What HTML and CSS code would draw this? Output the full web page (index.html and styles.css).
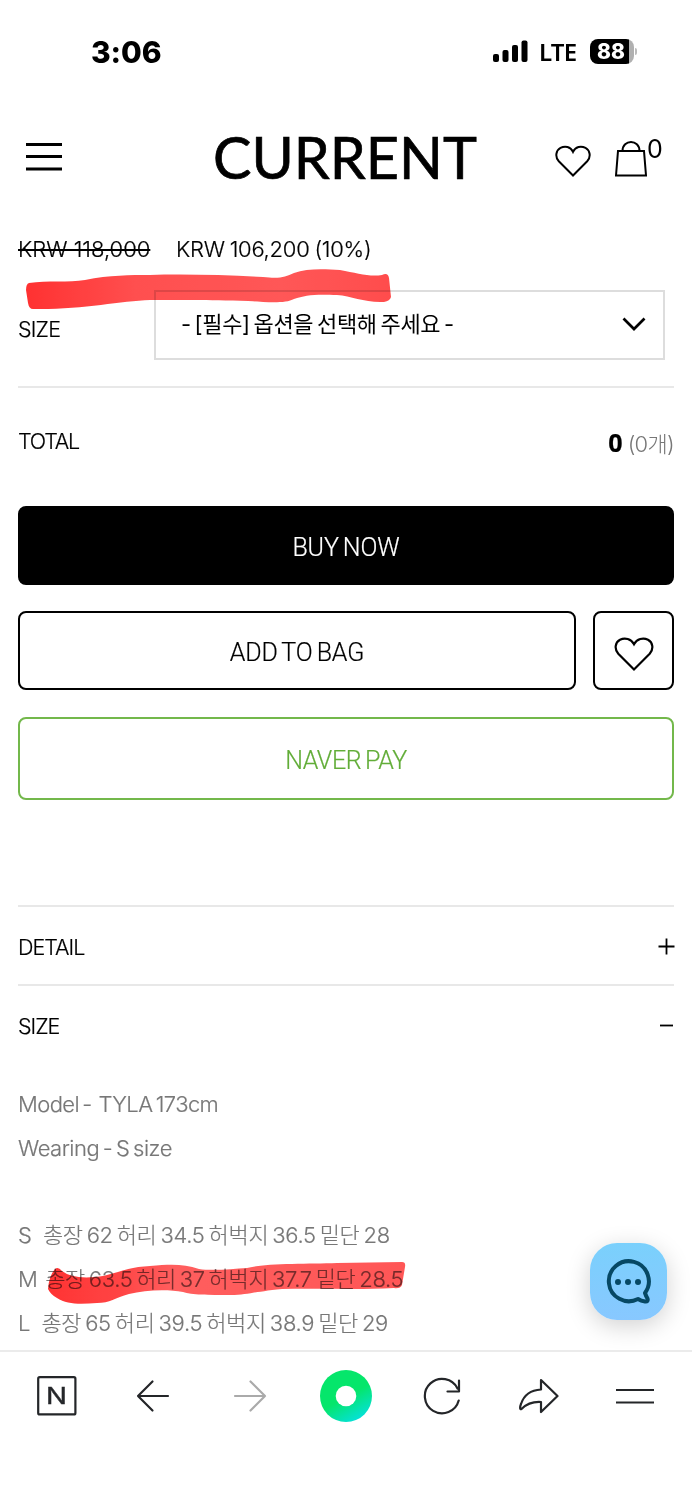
FILE: index.html
```html
<!DOCTYPE html>
<html lang="ko">
<head>
<meta charset="utf-8">
<title>CURRENT</title>
<link rel="stylesheet" href="styles.css">
</head>
<body>
<div class="status">
  <span class="clock">3:06</span>
  <div class="status-icons">
    <svg class="signal" width="35" height="23" viewBox="0 0 35 23"><rect x="0" y="14" width="6" height="8" rx="2"/><rect x="9.500" y="10" width="6" height="12" rx="2"/><rect x="19" y="5" width="6" height="17" rx="2"/><rect x="28.500" y="0.500" width="6" height="21.500" rx="2"/></svg>
    <span class="lte">LTE</span>
    <span class="battery"><span class="level">88</span></span><span class="nub"></span>
  </div>
</div>
<header class="header">
  <svg class="burger" width="36" height="30" viewBox="0 0 36 30"><path d="M0 2.500H36M0 14.500H36M0 27H36" stroke="#000" stroke-width="3"/></svg>
  <svg class="logo" width="272" height="76" viewBox="-2 -8 272 76"><text x="-2" y="50.500" textLength="264" lengthAdjust="spacingAndGlyphs">CURRENT</text></svg>
  <svg class="wish" width="36" height="32" viewBox="0 0 36 32"><path d="M18 30.500L3.800 16.300C-.3 12 1 5 5.500 2.800C10 .6 15.500 1.500 18 6.800C20.500 1.500 26 .6 30.500 2.800C35 5 36.300 12 32.200 16.300Z" fill="none" stroke="#000" stroke-width="2"/></svg>
  <svg class="bag" width="32" height="37" viewBox="0 0 32 37"><path d="M3 11H29L31 35.500H1ZM7.500 11C7.500-1 24.500-1 24.500 11" fill="none" stroke="#000" stroke-width="2"/></svg>
  <span class="count">0</span>
</header>
<main class="product">
  <div class="prices"><s class="t-old">KRW 118,000</s><span class="t-new">KRW 106,200 (10%)</span></div>
  <div class="option">
    <label>SIZE</label>
    <div class="select"><span class="t-select">- [필수] 옵션을 선택해 주세요 -</span>
      <svg width="24" height="15" viewBox="0 0 24 15"><path d="M1.500 1.500L12 12L22.500 1.500" fill="none" stroke="#000" stroke-width="2.700"/></svg></div>
  </div>
  <div class="total"><span class="t-total">TOTAL</span><span class="sum"><b>0</b><span class="qty">(0개)</span></span></div>
  <div class="actions">
    <div class="btn buy"><span>BUY NOW</span></div>
    <div class="btn-row">
      <div class="btn add"><span>ADD TO BAG</span></div>
      <div class="btn heart"><svg width="40" height="35" viewBox="0 0 40 35"><path d="M20 32.500L4.300 16.800C0 12 1.200 5.200 6 2.700C11 .4 17 1.800 20 7.200C23 1.800 29 .4 34 2.700C38.800 5.200 40 12 35.700 16.800Z" fill="none" stroke="#000" stroke-width="2.200"/></svg></div>
    </div>
    <div class="btn naver"><span>NAVER PAY</span></div>
  </div>
  <section class="accordion">
    <div class="row"><span class="t-detail">DETAIL</span><svg width="17" height="17" viewBox="0 0 17 17"><path d="M.5 8.500H16.500M8.500 .5V16.500" stroke="#000" stroke-width="1.800"/></svg></div>
    <div class="row"><span class="t-size">SIZE</span><svg width="17" height="17" viewBox="0 0 17 17"><path d="M2 8.500H15" stroke="#000" stroke-width="1.800"/></svg></div>
    <div class="info">
      <div class="t-model">Model -&nbsp; TYLA 173cm</div>
      <div class="t-wear">Wearing - S size</div>
      <div>&nbsp;</div>
      <div class="size-line"><span class="letter">S&nbsp; </span>총장 62 허리 34.5 허벅지 36.5 밑단 28</div>
      <div class="size-line size-m"><span>M&nbsp; </span>총장 63.5 허리 37 허벅지 37.7 밑단 28.5</div>
      <div class="size-line"><span class="letter">L&nbsp; </span>총장 65 허리 39.5 허벅지 38.9 밑단 29</div>
    </div>
  </section>
</main>
<nav class="toolbar">
  <svg width="40" height="40" viewBox="0 0 40 40"><rect x="1.200" y="1.200" width="37.200" height="37.200" rx="1.500" fill="none" stroke="#242629" stroke-width="2.200"/><text class="n-mark" x="9" y="27.500" textLength="21" lengthAdjust="spacingAndGlyphs">N</text></svg>
  <svg width="34" height="34" viewBox="0 0 34 34"><path d="M32 17H2M16.500 2.500L2 17L16.500 31.500" class="line"/></svg>
  <svg width="34" height="34" viewBox="0 0 34 34"><path d="M2 17H32M17.500 2.500L32 17L17.500 31.500" class="line dim"/></svg>
  <svg width="52" height="52" viewBox="0 0 52 52"><defs><linearGradient id="ring" x1=".3" y1=".1" x2=".8" y2="1"><stop offset=".45" stop-color="#05e66b"/><stop offset="1" stop-color="#05e0e8"/></linearGradient></defs><circle cx="26" cy="26" r="26" fill="url(#ring)"/><circle cx="26" cy="26" r="10.300" fill="#fff"/></svg>
  <svg width="38" height="38" viewBox="0 0 38 38"><path d="M35.700 23.500A17.200 17.200 0 1 1 34.500 11.500M36 3.500V14.500H24.500" class="line"/></svg>
  <svg width="40" height="36" viewBox="0 0 40 36"><path d="M22 2L38.500 18L22 34V24C14 23.500 8 25.500 2.500 31C.5 32 1 28.500 2 26C5 17 12 12 22 11.500Z" class="line"/></svg>
  <svg width="40" height="18" viewBox="0 0 40 18"><path d="M1 3H39M1 15.500H39" class="line square"/></svg>
</nav>
<div class="chat"><svg width="46" height="46" viewBox="0 0 46 46"><path d="M40 34A20 20 0 1 0 33 40Q36 42 40 42.500Q43.500 43 42.500 39.500Q41 37 40 34Z" fill="none" stroke="#064864" stroke-width="4" stroke-linejoin="round"/><circle cx="13" cy="23" r="3"/><circle cx="23" cy="23" r="3"/><circle cx="33" cy="23" r="3"/></svg></div>
<svg class="marker marker-price" width="370" height="46" viewBox="0 0 370 46">
  <defs><linearGradient id="ink1"><stop offset="0" stop-color="#ff2626"/><stop offset=".3" stop-color="#ff4545"/><stop offset=".7" stop-color="#ff4e4e"/><stop offset="1" stop-color="#ff4242"/></linearGradient></defs>
  <path d="M4 15C22 12 44 15 60 12C85 7 105 7 125 7C160 6 200 7 238 9C255 11 260 9 269 5C282 0 300 1 315 2C332 5 344 9 357 7Q363 4 364 10L366 29Q365 33 359 34C340 35 327 28 312 27C290 26 280 27 269 31C260 36 240 34 223 33C180 32 155 32 125 32C95 33 55 42 8 41Q4 41 3 35L1 22Q1 16 4 15Z" fill="url(#ink1)"/></svg>
<svg class="marker marker-size" width="362" height="44" viewBox="0 0 362 44">
  <defs><linearGradient id="ink2"><stop offset="0" stop-color="#ff2828"/><stop offset=".2" stop-color="#ff3a3a"/><stop offset=".35" stop-color="#ff5555"/><stop offset="1" stop-color="#ff4d4d"/></linearGradient></defs>
  <path d="M8 7Q11 4 15 9Q25 17 48 15C65 14 78 5 103 4C125 2 137 2 152 7C165 9 185 7 200 6C220 1 260 2 290 1L355 0Q359 0 358 5L355 23Q353 27 347 26C310 28 270 26 235 27C205 30 200 33 184 33C160 33 145 33 136 30C120 27 98 28 82 32C68 36 63 41 50 41C35 42 20 43 10 36Q4 33 1 27Q2 14 8 7Z" fill="url(#ink2)"/></svg>
</body>
</html>
```

FILE: styles.css
```css
* { box-sizing: border-box; }
body {
  margin: 0;
  width: 692px;
  height: 1500px;
  overflow: hidden;
  position: relative;
  display: flex;
  flex-direction: column;
  background: #fff;
  color: #000;
  font: 300 22px/30px Inter, "Noto Sans CJK KR", sans-serif;
  white-space: nowrap;
}
svg { display: block; flex: none; }
span, s, b { white-space: nowrap; }

.status { height: 104px; padding: 35px 55px 0 91px; display: flex; justify-content: space-between; align-items: flex-start; }
.clock { font-weight: 800; font-size: 30px; line-height: 34px; letter-spacing: -0.1px; }
.status-icons { display: flex; align-items: center; height: 33px; }
.lte { font: 600 24px/30px "Noto Sans", sans-serif; margin-left: 11px; width: 51px; letter-spacing: -0.8px; }
.battery { width: 44px; height: 25px; border-radius: 8px; background: linear-gradient(90deg, #000 39px, #b0b0b0 39px); display: flex; }
.level { width: 42px; color: #fff; font-weight: 800; font-size: 21px; line-height: 26px; text-align: center; }
.nub { width: 2px; height: 7px; margin-left: 1px; background: #bbb; border-radius: 0 2px 2px 0; }

.header { height: 106px; padding: 26px 30px 0 26px; display: flex; align-items: flex-start; }
.burger { margin-top: 12px; }
.logo { margin: -10px 0 0 151px; }
.logo text { font: 400 58px Lato, sans-serif; stroke: #000; stroke-width: 0.7px; }
.wish { margin-left: 70px; margin-top: 15px; }
.bag { margin-left: 24px; margin-top: 10px; }
.count { font-size: 25px; font-weight: 400; line-height: 30px; margin-top: 4px; }

.product { padding: 0 18px; height: 1140px; flex: none; -webkit-text-stroke: 0.2px; }
.prices { height: 80px; padding-top: 24px; display: flex; }
.t-old { width: 133px; margin-right: 25px; text-decoration-thickness: 2px; }
.t-new { letter-spacing: -0.25px; word-spacing: -1px; }
.option { height: 98px; display: flex; align-items: flex-start; border-bottom: 2px solid #e8e8e8; }
.option label { width: 136px; padding-top: 24px; font-size: 21.5px; letter-spacing: -0.8px; }
.select { width: 511px; height: 70px; border: 2px solid #ddd; padding: 0 17px 2px 25px; display: flex; align-items: center; justify-content: space-between; font-weight: 400; -webkit-text-stroke: 0; }
.t-select { letter-spacing: -0.35px; word-spacing: -2px; }
.total { height: 118px; padding-top: 38px; display: flex; justify-content: space-between; }
.t-total { letter-spacing: -1.2px; font-size: 21.5px; }
.sum { padding-top: 1px; }
.sum b { font: 700 25px/30px "Noto Sans", sans-serif; margin-right: 5px; }
.qty { color: #777; letter-spacing: -0.7px; -webkit-text-stroke: 0; }

.actions { display: flex; flex-direction: column; gap: 26px; }
.btn { height: 79px; border: 2px solid #000; border-radius: 8px; display: flex; align-items: center; justify-content: center; padding-top: 4px; font: 300 25px/30px Roboto, sans-serif; letter-spacing: -0.1px; word-spacing: -2px; }
.btn-row { display: flex; gap: 17px; }
.buy { color: #fff; background: #000; }
.add { width: 558px; }
.heart { width: 81px; padding-top: 7px; }
.naver { height: 83px; border-color: #73b84b; color: #62ad38; margin-top: 1px; padding-top: 4px; letter-spacing: -0.4px; }

.accordion { margin-top: 105px; }
.row { height: 79px; border-top: 2px solid #e8e8e8; display: flex; align-items: center; justify-content: space-between; padding-top: 3px; }
.t-detail, .t-size { letter-spacing: -1px; font-size: 21.5px; }
.row svg { margin: -1px -1px 0 0; }
.info { padding-top: 19px; color: #777; line-height: 44px; }
.info div { height: 44px; }
.t-model { letter-spacing: -0.6px; word-spacing: -2.2px; }
.t-wear { letter-spacing: -0.5px; word-spacing: -2px; }
.size-line { letter-spacing: -0.3px; word-spacing: -2px; position: relative; top: -1px; }
.letter { margin-right: 3.5px; }
.size-m { letter-spacing: -0.35px; }

.toolbar { height: 150px; flex: none; border-top: 2px solid #ebebeb; padding: 18px 9px 0; display: grid; grid-template-columns: repeat(7, 1fr); justify-items: center; align-content: start; align-items: center; background: #fff; position: relative; z-index: 2; }
.line { fill: none; stroke: #242629; stroke-width: 2.200; stroke-linecap: round; stroke-linejoin: round; }
.dim { stroke: #aaa; }
.square { stroke-linecap: butt; }
.n-mark { font: 400 23px Inter, sans-serif; fill: #242629; stroke: #242629; stroke-width: 0.4px; }

.chat { position: absolute; left: 590px; top: 1243px; width: 77px; height: 77px; padding-right: 2px; border-radius: 27px; background: linear-gradient(#7ad0fc, #88c8ff); box-shadow: 0 6px 24px rgba(0,0,0,.18); display: grid; place-items: center; }
.chat circle { fill: #064864; }
.marker { position: absolute; mix-blend-mode: multiply; opacity: .95; filter: blur(.6px); }
.marker-price { left: 25px; top: 268px; }
.marker-size { left: 47px; top: 1262px; }
```
